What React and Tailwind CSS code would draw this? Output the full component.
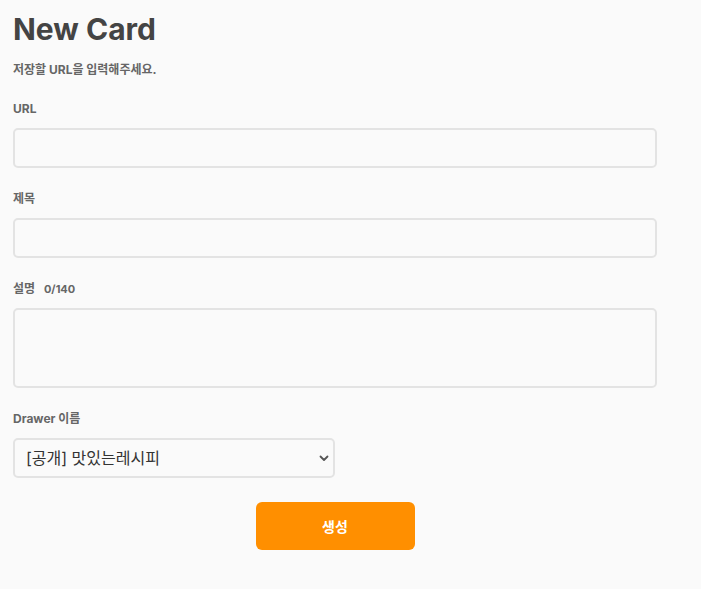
import React, { useState } from 'react';

const font = { fontFamily: 'Inter, "Noto Sans CJK KR", sans-serif' };

const Label = ({ children }) => (
  <label className="block h-4 text-[12px] leading-4 font-bold text-[#666] mb-[11px]">{children}</label>
);

const App = () => {
  const [desc, setDesc] = useState('');

  return (
    <div className="min-h-[589px] bg-[#fafafa] px-[13px] pt-[9px]" style={font}>
      <div className="w-[644px]">
        <h1 className="text-[30px] leading-10 font-bold text-[#444]">New Card</h1>
        <p className="mt-[13px] h-4 text-[12px] leading-4 font-bold text-[#666]">저장할 URL을 입력해주세요.</p>

        <div className="mt-[23px]">
          <Label>URL</Label>
          <input className="block w-full h-[40px] rounded-[5px] border-2 border-[#e3e3e3] bg-[#fafafa] px-3 outline-none" />
        </div>

        <div className="mt-[23px]">
          <Label>제목</Label>
          <input className="block w-full h-[40px] rounded-[5px] border-2 border-[#e3e3e3] bg-[#fafafa] px-3 outline-none" />
        </div>

        <div className="mt-[23px]">
          <Label>
            설명 <span className="ml-[6px] text-[11px]">{desc.length}/140</span>
          </Label>
          <textarea
            value={desc}
            maxLength={140}
            onChange={(e) => setDesc(e.target.value)}
            className="block w-full h-[80px] rounded-[5px] border-2 border-[#e3e3e3] bg-[#fafafa] px-3 py-2 outline-none resize-none"
          />
        </div>

        <div className="mt-[23px]">
          <Label>Drawer 이름</Label>
          <div className="relative w-[322px]">
            <select className="block w-full h-[40px] appearance-none rounded-[5px] border-2 border-[#e3e3e3] bg-[#fafafa] pl-[11px] pr-8 text-[16px] text-[#333] outline-none">
              <option>[공개] 맛있는레시피</option>
            </select>
            <svg
              className="absolute right-[6px] top-[17px] pointer-events-none"
              width="10"
              height="7"
              viewBox="0 0 10 7"
              fill="none"
            >
              <path d="M1.5 1.5L5 5L8.5 1.5" stroke="#555" strokeWidth="1.8" strokeLinecap="round" strokeLinejoin="round" />
            </svg>
          </div>
        </div>

        <div className="mt-[24px] flex justify-center">
          <button className="w-[159px] h-[48px] rounded-[6px] bg-[#ff8f00] text-white text-[14px] font-bold">
            생성
          </button>
        </div>
      </div>
    </div>
  );
};

export default App;
